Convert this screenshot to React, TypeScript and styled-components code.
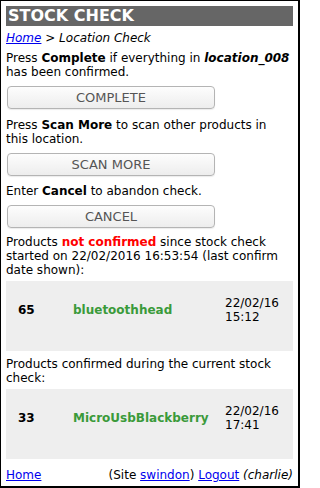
import React from 'react';
import styled, { createGlobalStyle } from 'styled-components';

const GlobalStyle = createGlobalStyle`
  html, body {
    margin: 0;
    padding: 0;
    background: #fff;
  }
  body {
    font-family: 'DejaVu Sans', Verdana, sans-serif;
    font-size: 12px;
    color: #000;
  }
`;

const Page = styled.div`
  box-sizing: border-box;
  width: 300px;
  height: 488px;
  border: 1px solid #000;
  border-right-width: 2px;
  border-bottom-width: 2px;
  padding: 5px 5px 0 5px;
  display: flex;
  flex-direction: column;
  line-height: 14px;
`;

const Title = styled.h1`
  margin: 0;
  height: 20px;
  background: #666;
  color: #fff;
  font-size: 16px;
  font-weight: bold;
  line-height: 20px;
  padding-left: 2px;
`;

const Crumbs = styled.div`
  margin-top: 5px;
  font-style: italic;
`;

const Link = styled.a`
  color: #00e;
  text-decoration: underline;
  cursor: pointer;
`;

const Para = styled.p<{ $gap?: number }>`
  margin: ${p => p.$gap ?? 8}px 0 0 0;
`;

const Red = styled.b`
  color: #f00;
`;

const Button = styled.button`
  display: block;
  box-sizing: border-box;
  width: 208px;
  height: 23px;
  margin: 7px 0 0 1px;
  padding: 0;
  border: 1px solid #b4b4b4;
  border-radius: 4px;
  background: linear-gradient(#fdfdfd, #ededed);
  box-shadow: 0 1px 1px rgba(0, 0, 0, 0.08);
  font-family: 'DejaVu Sans', Verdana, sans-serif;
  font-size: 13px;
  color: #555;
  line-height: 21px;
  text-align: center;
`;

const Table = styled.div`
  margin-top: 4px;
  background: #eee;
  height: 70px;
  box-sizing: border-box;
  padding-top: 15px;
  display: grid;
  grid-template-columns: 67px 1fr 68px;
  align-items: start;
`;

const Qty = styled.b`
  padding-left: 12px;
  line-height: 28px;
`;

const Name = styled.b`
  color: #3a9a3a;
  line-height: 28px;
`;

const When = styled.div``;

const Footer = styled.div`
  margin-top: 9px;
  display: flex;
  justify-content: space-between;
`;

interface RowProps {
  qty: number;
  name: string;
  date: string;
  time: string;
}

const ProductRow = ({ qty, name, date, time }: RowProps) => (
  <Table>
    <Qty>{qty}</Qty>
    <Name>{name}</Name>
    <When>
      {date}
      <br />
      {time}
    </When>
  </Table>
);

export default function App() {
  return (
    <>
      <GlobalStyle />
      <Page>
        <Title>STOCK CHECK</Title>
        <Crumbs>
          <Link>Home</Link> &gt; Location Check
        </Crumbs>
        <Para $gap={6}>
          Press <b>Complete</b> if everything in <b><i>location_008</i></b> has been confirmed.
        </Para>
        <Button>COMPLETE</Button>
        <Para $gap={9}>
          Press <b>Scan More</b> to scan other products in
          <br />
          this location.
        </Para>
        <Button>SCAN MORE</Button>
        <Para>
          Enter <b>Cancel</b> to abandon check.
        </Para>
        <Button>CANCEL</Button>
        <Para $gap={7}>
          Products <Red>not confirmed</Red> since stock check started on 22/02/2016 16:53:54 (last
          confirm date shown):
        </Para>
        <ProductRow qty={65} name="bluetoothhead" date="22/02/16" time="15:12" />
        <Para $gap={6}>Products confirmed during the current stock check:</Para>
        <ProductRow qty={33} name="MicroUsbBlackberry" date="22/02/16" time="17:41" />
        <Footer>
          <Link>Home</Link>
          <span>
            (Site <Link>swindon</Link>) <Link>Logout</Link> <i>(charlie)</i>
          </span>
        </Footer>
      </Page>
    </>
  );
}
